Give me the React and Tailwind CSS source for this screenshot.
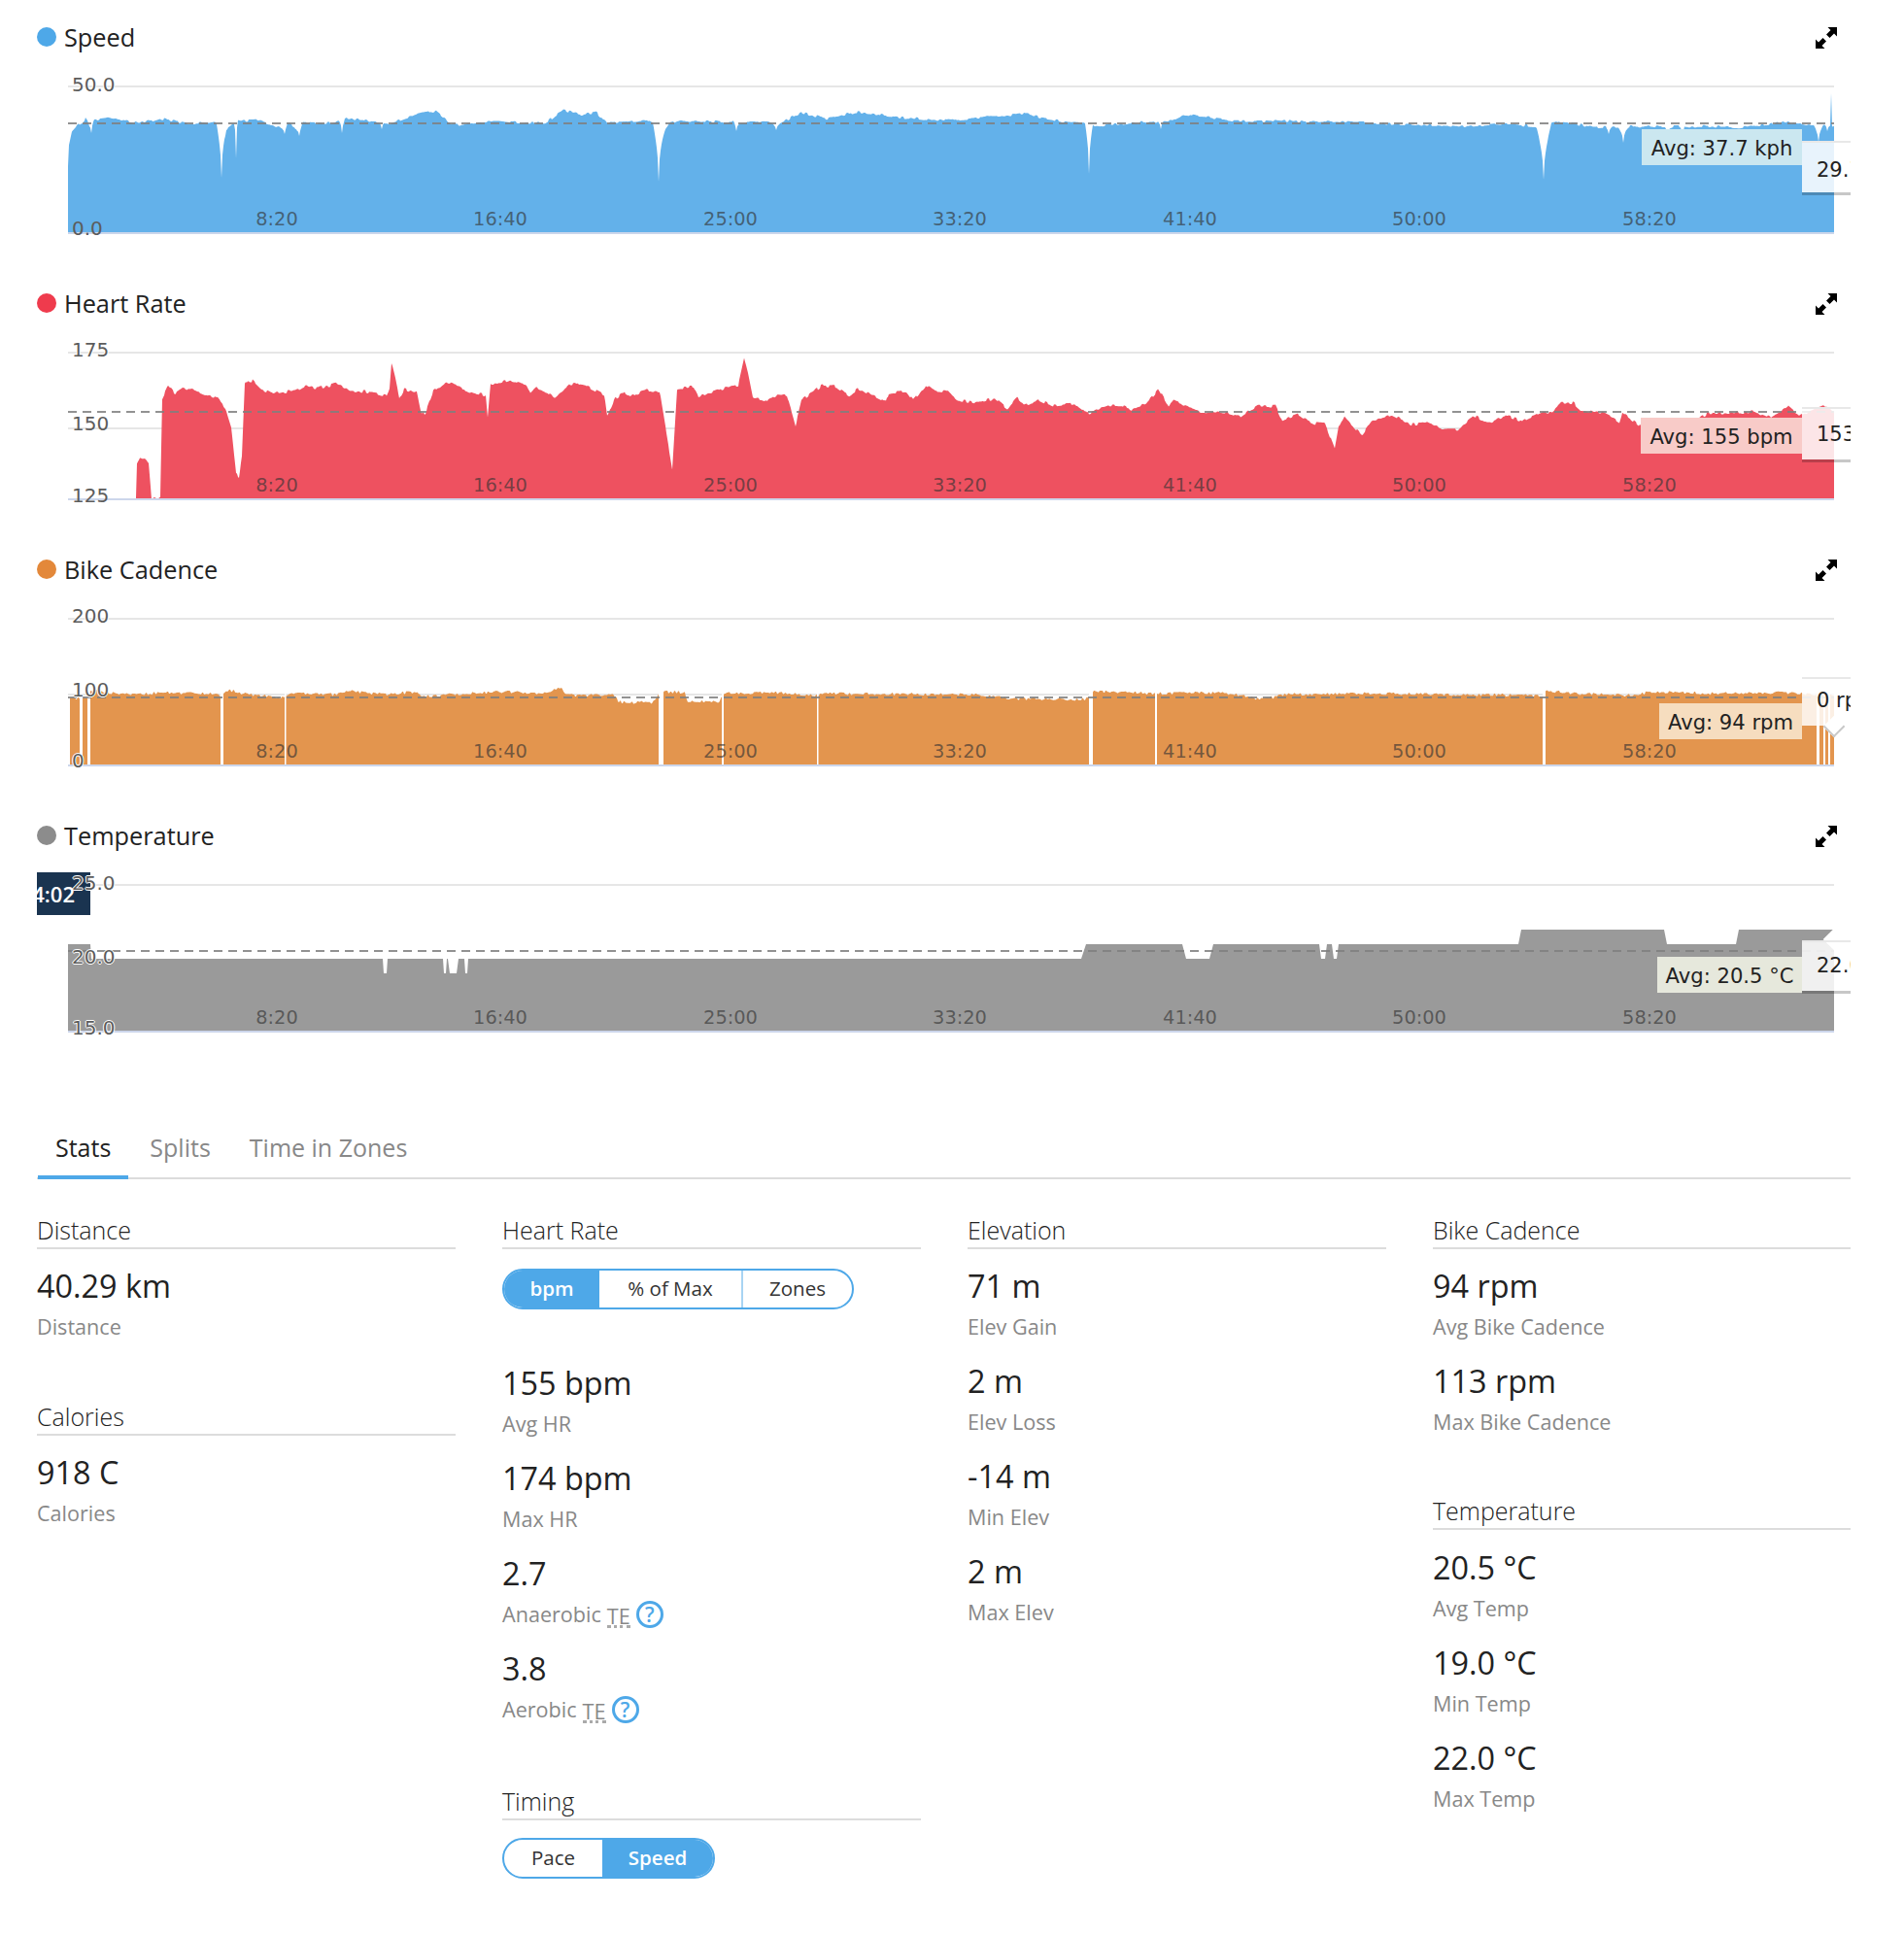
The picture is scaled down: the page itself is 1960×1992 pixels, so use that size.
import React from "react";

function rng(seed) {
  let s = seed;
  return () => {
    s = (s * 1664525 + 1013904223) % 4294967296;
    return s / 4294967296;
  };
}

function buildArea({ anchors, dips = [], noise = 0, base, seed = 7, hold = 3 }) {
  const r = rng(seed);
  const x0 = anchors[0][0];
  const x1 = anchors[anchors.length - 1][0];
  let d = `M${x0} ${base}`;
  let j = 0;
  let n = 0;
  for (let x = x0; x <= x1; x++) {
    while (j < anchors.length - 2 && anchors[j + 1][0] <= x) j++;
    const [ax, ay] = anchors[j];
    const [bx, by] = anchors[j + 1];
    let y = ay + ((by - ay) * (x - ax)) / Math.max(bx - ax, 0.001);
    if ((x - x0) % hold === 0) n = (r() - 0.5) * 2 * noise;
    y += n;
    for (const [cx, cy, hw] of dips) {
      const t = Math.abs(x - cx) / hw;
      if (t < 1) y = Math.max(y, cy - (cy - y) * Math.sqrt(t));
    }
    d += `L${x} ${y.toFixed(1)}`;
  }
  return `${d}L${x1} ${base}Z`;
}

const speed = {
  anchors: [[70,172],[71,150],[74,136],[80,129],[85,126],[88,122],[92,128],[96,124],[112,121],[143,127],[165,122],[192,127],[221,126],[232,134],[238,130],[245,124],[268,124],[281,130],[292,132],[297,127],[308,134],[312,126],[344,127],[357,121],[375,124],[393,127],[402,127],[429,118],[449,114],[464,127],[473,129],[513,124],[540,127],[562,126],[580,113],[598,118],[614,116],[625,127],[670,124],[676,127],[684,135],[690,127],[700,124],[760,126],[790,125],[800,128],[825,116],[851,122],[883,115],[927,121],[978,124],[1054,117],[1092,125],[1118,127],[1130,130],[1143,128],[1206,124],[1219,118],[1270,124],[1397,126],[1499,130],[1550,128],[1585,130],[1595,128],[1605,125],[1615,126],[1640,131],[1690,130],[1760,130],[1790,131],[1820,128],[1836,125],[1860,129],[1884,129],[1885,95],[1886,129],[1888,130]],
  dips: [[94,137,3],[228,183,5],[243,163,1.5],[293,138,3],[308,140,3],[352,137,3],[393,133,2],[678,187,6],[758,135,3],[799,134,4],[1121,179,4],[1195,133,3],[1589,185,8],[1656,138,3],[1671,147,5],[1717,140,4],[1732,145,2],[1872,146,5],[1881,135,2.5]],
  noise: 1.3, base: 240, seed: 11,
};

const heart = {
  anchors: [[140,513],[141,478],[144,472],[149,472],[153,476],[155,500],[156,513],[157,513],[165,513],[167,410],[173,397],[180,405],[188,400],[200,402],[224,410],[232,420],[238,440],[243,488],[246,491],[249,470],[252,396],[255,392],[260,392],[268,400],[280,405],[306,402],[315,398],[325,400],[347,395],[360,402],[377,403],[398,407],[401,400],[403,374],[407,390],[411,410],[416,401],[429,403],[434,427],[438,425],[446,403],[459,394],[465,395],[472,398],[474,400],[490,405],[500,407],[502,430],[505,395],[512,395],[525,391],[541,395],[546,405],[552,398],[561,403],[571,410],[587,396],[600,395],[622,407],[625,429],[633,410],[643,404],[650,408],[663,402],[679,403],[685,440],[692,482],[697,400],[714,398],[719,408],[745,400],[760,397],[766,370],[770,385],[775,410],[790,413],[800,407],[810,407],[819,438],[825,412],[846,397],[861,398],[874,407],[884,400],[912,414],[915,405],[933,403],[940,412],[953,397],[963,403],[976,403],[986,412],[1004,415],[1024,410],[1037,421],[1047,409],[1055,417],[1070,412],[1086,418],[1106,415],[1119,426],[1142,418],[1155,418],[1165,422],[1180,415],[1193,401],[1203,418],[1208,412],[1223,418],[1236,425],[1249,424],[1264,425],[1277,429],[1295,418],[1313,418],[1320,433],[1336,427],[1353,436],[1364,436],[1374,463],[1378,440],[1384,428],[1392,438],[1402,448],[1412,434],[1433,427],[1453,437],[1468,435],[1484,442],[1501,442],[1517,428],[1533,435],[1550,428],[1567,433],[1588,423],[1597,425],[1607,415],[1620,415],[1628,423],[1650,425],[1667,435],[1670,425],[1690,440],[1700,435],[1717,440],[1727,437],[1740,435],[1760,425],[1797,425],[1805,423],[1823,430],[1840,418],[1853,428],[1877,416],[1888,425]],
  noise: 1.6, base: 514, seed: 23,
};

const cadence = {
  anchors: [[72,719],[92,719],[93,710],[112,713],[140,715],[170,713],[222,714],[227,716],[235,710],[250,714],[290,718],[300,714],[345,715],[360,711],[395,715],[430,712],[433,717],[460,715],[520,712],[560,714],[578,708],[582,714],[590,716],[632,715],[637,723],[672,723],[680,712],[705,713],[708,722],[740,722],[745,714],[800,713],[840,716],[845,714],[1000,715],[1040,719],[1110,720],[1118,720],[1125,712],[1190,714],[1240,713],[1270,714],[1295,720],[1310,718],[1320,715],[1420,714],[1588,716],[1592,711],[1620,714],[1680,716],[1700,712],[1760,714],[1840,713],[1888,716]],
  gaps: [[82,3],[90,3],[227,3],[293,1.5],[678,5],[743,2],[841,1.5],[1121,4],[1189,2],[1588,3],[1870,3],[1877,2],[1882,2]],
  noise: 1.4, base: 788, seed: 31, hold: 2,
};

const temp = {
  anchors: [[70,972],[93,972],[94,987],[393,987],[394,987],[395,1002],[398,1002],[399,987],[456,987],[457,1002],[459,1002],[460,987],[461,987],[463,1002],[470,1002],[472,987],[478,987],[479,1002],[481,1002],[482,987],[1113,987],[1118,972],[1217,972],[1221,987],[1245,987],[1249,972],[1358,972],[1360,987],[1364,987],[1366,972],[1371,972],[1373,987],[1376,987],[1378,972],[1563,972],[1566,957],[1713,957],[1716,972],[1787,972],[1790,957],[1888,957]],
  noise: 0, base: 1062, seed: 3,
};

function ExpandIcon() {
  return (
    <svg width="22" height="22" viewBox="0 0 22 22" className="mr-[14px] mt-[2px] block" fill="#000">
      <path d="M22 0H12.5L15.5 3L11 7.5L14.5 11L19 6.5L22 9.5Z" />
      <path d="M0 22V12.5L3 15.5L7.5 11L11 14.5L6.5 19L9.5 22Z" />
    </svg>
  );
}

const haloCls =
  "[text-shadow:-1px_0_0_#fff,1px_0_0_#fff,0_-1px_0_#fff,0_1px_0_#fff]";

function YLabel({ className, children }) {
  return (
    <span className={`absolute left-[36px] text-[20px] leading-[24px] text-[#5c5c5c] ${haloCls} ${className}`}>
      {children}
    </span>
  );
}

function XLabel({ className, children }) {
  return (
    <span className={`absolute top-[154px] -translate-x-1/2 text-[19.4px] leading-[24px] text-[#333]/65 ${className}`}>
      {children}
    </span>
  );
}

function XLabels() {
  return (
    <>
      <XLabel className="left-[247px]">8:20</XLabel>
      <XLabel className="left-[477px]">16:40</XLabel>
      <XLabel className="left-[714px]">25:00</XLabel>
      <XLabel className="left-[950px]">33:20</XLabel>
      <XLabel className="left-[1187px]">41:40</XLabel>
      <XLabel className="left-[1423px]">50:00</XLabel>
      <XLabel className="left-[1660px]">58:20</XLabel>
    </>
  );
}

function Tooltip({ className, children }) {
  return (
    <div className={`absolute left-[1817px] w-[60px] overflow-hidden bg-white/85 pl-[15px] text-[21px] text-[#222] whitespace-nowrap border-t-2 border-[#e8e8e8] shadow-[0_3px_0_rgba(0,0,0,0.22)] ${className}`}>
      {children}
    </div>
  );
}

function ChartHeader({ dot, title }) {
  return (
    <div className="flex h-[44px] items-center justify-between">
      <div className="flex items-center gap-[8px]">
        <span className={`h-[20px] w-[20px] rounded-full ${dot}`} />
        <span className="text-[25.3px] leading-[34px] text-[#222]">{title}</span>
      </div>
      <ExpandIcon />
    </div>
  );
}

function Plot({ index, data, fill, grid, avgY, children }) {
  const top = 60 + 274 * index;
  const d = buildArea(data);
  return (
    <div className="relative h-[230px] w-[1867px] overflow-hidden font-['DejaVu_Sans',sans-serif]">
      <svg width="1867" height="230" viewBox={`38 ${top} 1867 230`} className="absolute inset-0 block">
        {grid.map((y) => (
          <line key={y} x1="70" x2="1888" y1={y} y2={y} stroke="#e6e6e6" strokeWidth="2" />
        ))}
        <path d={d} fill={fill} />
        {(data.gaps || []).map(([x, w]) => (
          <rect key={x} x={x} y={top + 60} width={w} height={data.base - top - 60 + 1} fill="#fff" />
        ))}
        <line x1="70" x2="1888" y1={data.base} y2={data.base} stroke="#ccd6eb" strokeWidth="2" />
        <line x1="70" x2="1888" y1={avgY} y2={avgY} stroke="#7f7f7f" strokeOpacity="0.85" strokeWidth="2" strokeDasharray="9 6" />
      </svg>
      <XLabels />
      {children}
    </div>
  );
}

function AvgLabel({ className, children }) {
  return (
    <div className={`absolute flex h-[37px] items-center justify-center pt-[3px] text-[21.1px] text-[#222] whitespace-nowrap ${className}`}>
      {children}
    </div>
  );
}

function Charts() {
  return (
    <div className="w-[1867px]">
      <section className="h-[274px]">
        <ChartHeader dot="bg-[#4ea8e8]" title="Speed" />
        <Plot index={0} data={speed} fill="#63b1ea" grid={[89]} avgY={127}>
          <YLabel className="top-[15px]">50.0</YLabel>
          <YLabel className="top-[163px] [text-shadow:none]">0.0</YLabel>
          <AvgLabel className="left-[1652px] top-[73px] w-[165px] bg-[#cbe7f0]">Avg: 37.7 kph</AvgLabel>
          <Tooltip className="top-[85px] h-[53px] leading-[56px]">29.7 kph</Tooltip>
        </Plot>
      </section>

      <section className="h-[274px]">
        <ChartHeader dot="bg-[#ef3b4d]" title="Heart Rate" />
        <Plot index={1} data={heart} fill="#ee5160" grid={[363, 441]} avgY={424}>
          <YLabel className="top-[14px]">175</YLabel>
          <YLabel className="top-[90px] [text-shadow:none]">150</YLabel>
          <YLabel className="top-[164px] [text-shadow:none]">125</YLabel>
          <AvgLabel className="left-[1651px] top-[96px] w-[166px] bg-[#f8cbc8]">Avg: 155 bpm</AvgLabel>
          <Tooltip className="top-[85px] h-[54px] leading-[52px]">153 bpm</Tooltip>
        </Plot>
      </section>

      <section className="h-[274px]">
        <ChartHeader dot="bg-[#e3883a]" title="Bike Cadence" />
        <Plot index={2} data={cadence} fill="#e3954e" grid={[637, 715]} avgY={718}>
          <YLabel className="top-[14px]">200</YLabel>
          <YLabel className="top-[90px]">100</YLabel>
          <YLabel className="top-[163px]">0</YLabel>
          <AvgLabel className="left-[1670px] top-[116px] w-[147px] bg-[#f6ddbf]">Avg: 94 rpm</AvgLabel>
          <Tooltip className="top-[89px] h-[50px] leading-[44px] shadow-none">0 rpm</Tooltip>
          <span className="absolute left-[1842px] top-[132px] h-[16px] w-[16px] rotate-45 border-b-2 border-r-2 border-[#c8c8c8] bg-white" />
        </Plot>
      </section>

      <section className="h-[274px]">
        <ChartHeader dot="bg-[#8c8c8c]" title="Temperature" />
        <Plot index={3} data={temp} fill="#9a9a9a" grid={[911]} avgY={979}>
          <div className="absolute left-0 top-[16px] flex h-[44px] w-[55px] items-center justify-end overflow-hidden bg-[#1a3450] pr-[16px] font-['Open_Sans',sans-serif] text-[22px] font-semibold text-white whitespace-nowrap">
            4:02
          </div>
          <YLabel className="top-[15px]">25.0</YLabel>
          <YLabel className="top-[91px]">20.0</YLabel>
          <YLabel className="top-[164px]">15.0</YLabel>
          <AvgLabel className="left-[1668px] top-[103px] w-[149px] bg-[#e6e8dc]">Avg: 20.5 °C</AvgLabel>
          <span className="absolute left-[1842px] top-[77px] h-[16px] w-[16px] rotate-45 bg-white" />
          <Tooltip className="top-[86px] h-[52px] leading-[48px] border-t-0">22.0 °C</Tooltip>
        </Plot>
      </section>
    </div>
  );
}

function Heading({ children, className = "" }) {
  return (
    <div className={`h-[36px] border-b-2 border-[#dcdcdc] text-[25px] font-light leading-[33px] text-[#222] ${className}`}>
      {children}
    </div>
  );
}

function Stat({ value, label, help }) {
  return (
    <div className="h-[98px]">
      <div className="pb-[2px] text-[32.4px] leading-[40px] text-[#222]">{value}</div>
      <div className="flex items-center text-[21.6px] leading-[42px] text-[#888]">{label}{help}</div>
    </div>
  );
}

function TE() {
  return (
    <>
      <span className="ml-[6px] inline-block h-[28px] border-b-[3px] border-dotted border-[#aaa] leading-[32px]">TE</span>
      <span className="ml-[6px] flex h-[28px] w-[28px] items-center justify-center rounded-full border-[3px] border-[#4ea8e8] text-[21px] font-semibold leading-none text-[#4ea8e8]">?</span>
    </>
  );
}

function Segment({ active, className = "", children }) {
  return (
    <div className={`flex items-center justify-center pb-[2px] text-[20.5px] ${active ? "bg-[#4ea8e8] font-semibold text-white" : "text-[#333]"} ${className}`}>
      {children}
    </div>
  );
}

function Stats() {
  return (
    <div className="w-[1867px]">
      <div className="mt-[46px] flex h-[56px] gap-[4px] border-b-2 border-[#dcdcdc] pl-px text-[25px]">
        <div className="h-[56px] border-b-4 border-[#4ea8e8] px-[18px] leading-[46px] text-[#222]">Stats</div>
        <div className="px-[18px] leading-[46px] text-[#888]">Splits</div>
        <div className="px-[18px] leading-[46px] text-[#888]">Time in Zones</div>
      </div>
      <div className="mt-[36px] grid grid-cols-[431px_431px_431px_430px] gap-x-[48px]">
        <div>
          <Heading>Distance</Heading>
          <div className="mt-[17px]">
            <Stat value="40.29 km" label="Distance" />
          </div>
          <Heading className="mt-[41px]">Calories</Heading>
          <div className="mt-[17px]">
            <Stat value="918 C" label="Calories" />
          </div>
        </div>

        <div>
          <Heading>Heart Rate</Heading>
          <div className="mt-[18px] h-[99px] pt-[2px]">
            <div className="flex h-[42px] w-[362px] overflow-hidden rounded-full border-2 border-[#4ea8e8]">
              <Segment active className="w-[98px]">bpm</Segment>
              <Segment className="w-[148px] border-r-2 border-[#a8d4f3]">% of Max</Segment>
              <Segment className="flex-1">Zones</Segment>
            </div>
          </div>
          <Stat value="155 bpm" label="Avg HR" />
          <Stat value="174 bpm" label="Max HR" />
          <Stat value="2.7" label="Anaerobic" help={<TE />} />
          <Stat value="3.8" label="Aerobic" help={<TE />} />
          <Heading className="mt-[43px]">Timing</Heading>
          <div className="mt-[18px] flex h-[42px] w-[219px] overflow-hidden rounded-full border-2 border-[#4ea8e8]">
            <Segment className="w-[101px]">Pace</Segment>
            <Segment active className="flex-1">Speed</Segment>
          </div>
        </div>

        <div>
          <Heading>Elevation</Heading>
          <div className="mt-[17px]">
            <Stat value="71 m" label="Elev Gain" />
            <Stat value="2 m" label="Elev Loss" />
            <Stat value="-14 m" label="Min Elev" />
            <Stat value="2 m" label="Max Elev" />
          </div>
        </div>

        <div>
          <Heading>Bike Cadence</Heading>
          <div className="mt-[17px]">
            <Stat value="94 rpm" label="Avg Bike Cadence" />
            <Stat value="113 rpm" label="Max Bike Cadence" />
          </div>
          <Heading className="mt-[40px]">Temperature</Heading>
          <div className="mt-[18px]">
            <Stat value="20.5 °C" label="Avg Temp" />
            <Stat value="19.0 °C" label="Min Temp" />
            <Stat value="22.0 °C" label="Max Temp" />
          </div>
        </div>
      </div>
    </div>
  );
}

export default function App() {
  return (
    <div className="h-[1992px] w-[1960px] overflow-hidden bg-white pl-[38px] pt-[16px] font-['Open_Sans',sans-serif]">
      <Charts />
      <Stats />
    </div>
  );
}
